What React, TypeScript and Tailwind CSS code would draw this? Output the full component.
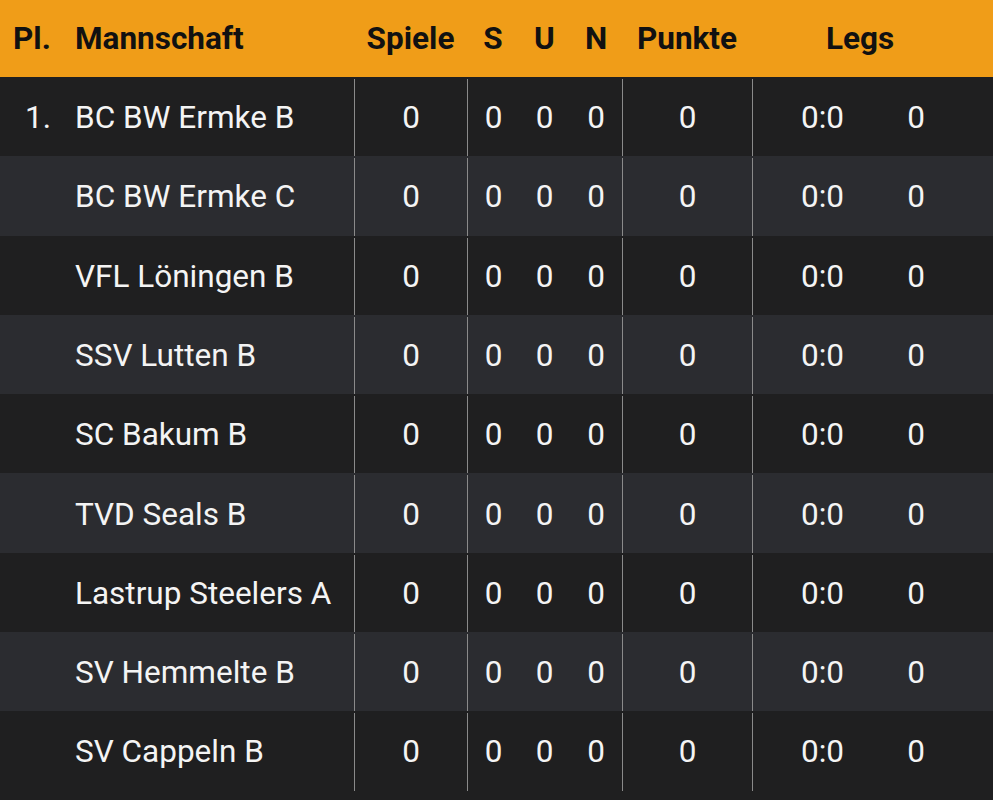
import React from "react";

const teams = [
  "BC BW Ermke B",
  "BC BW Ermke C",
  "VFL Löningen B",
  "SSV Lutten B",
  "SC Bakum B",
  "TVD Seals B",
  "Lastrup Steelers A",
  "SV Hemmelte B",
  "SV Cappeln B",
];

export default function App() {
  return (
    <div
      className="w-[993px] h-[800px] overflow-hidden bg-[#1f1f20] text-[#f4f4f4]"
      style={{ fontFamily: "Roboto, 'Liberation Sans', sans-serif" }}
    >
      <div className="flex h-[77px] items-center bg-[#f09d18] pt-[1px] text-[31.5px] font-bold text-[#111]">
        <div className="w-[75px] pl-[13px]">Pl.</div>
        <div className="w-[279px]">Mannschaft</div>
        <div className="w-[113px] text-center">Spiele</div>
        <div className="w-[52px] text-center">S</div>
        <div className="w-[51px] text-center">U</div>
        <div className="w-[52px] text-center">N</div>
        <div className="w-[130px] text-center">Punkte</div>
        <div className="w-[216px] text-center">Legs</div>
      </div>
      {teams.map((t, i) => (
        <div
          key={t}
          className={`flex h-[79.3px] items-center pt-[2px] text-[31.5px] ${
            i % 2 === 1 ? "bg-[#2b2c30]" : "bg-[#1f1f20]"
          }`}
        >
          <div className="w-[75px] pr-[24px] text-right">{i === 0 ? "1." : ""}</div>
          <div className="w-[279px] whitespace-nowrap">{t}</div>
          <div className="flex h-full w-[113px] items-center justify-center border-l border-[#8a8a8a]">0</div>
          <div className="flex h-full w-[52px] items-center justify-center border-l border-[#8a8a8a]">0</div>
          <div className="w-[51px] text-center">0</div>
          <div className="w-[52px] text-center">0</div>
          <div className="flex h-full w-[130px] items-center justify-center border-l border-[#8a8a8a]">0</div>
          <div className="flex h-full w-[140px] items-center justify-center border-l border-[#8a8a8a]">0:0</div>
          <div className="w-[48px] text-center">0</div>
        </div>
      ))}
    </div>
  );
}
